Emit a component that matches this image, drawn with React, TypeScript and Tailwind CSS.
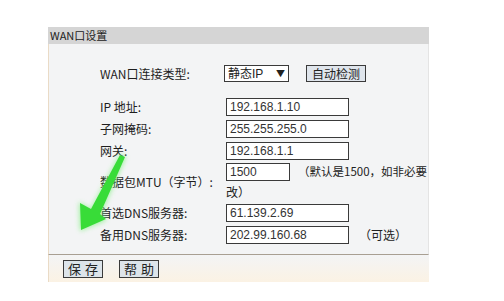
const FONT = 'font-["SimSun","Noto_Sans_CJK_SC",sans-serif]';

const Field = ({ value, wide = true }: { value: string; wide?: boolean }) => (
  <div
    className={`flex h-[18px] items-center border border-[#3a3a3a] bg-white pl-[3px] font-["Liberation_Sans",Arial,sans-serif] text-[12px] leading-none text-[#333] ${
      wide ? 'w-[123px]' : 'w-[64px]'
    }`}
  >
    {value}
  </div>
);

const Row = ({ label, children, className = '' }: { label: string; children: React.ReactNode; className?: string }) => (
  <div className={`grid grid-cols-[126px_1fr] items-center ${className}`}>
    <span className="text-[12px] leading-none text-[#1e1e1e]">{label}</span>
    <div className="flex items-center">{children}</div>
  </div>
);

const Arrow = () => (
  <svg className="pointer-events-none absolute left-0 top-0" width="504" height="301" aria-hidden>
    <defs>
      <filter id="glow" x="-50%" y="-50%" width="200%" height="200%">
        <feGaussianBlur stdDeviation="2.4" />
      </filter>
    </defs>
    <polygon
      points="120,154 126,157 101,214 107,220 80,231 79,202 91,209"
      fill="#84f084"
      opacity="0.75"
      filter="url(#glow)"
    />
    <polygon points="120,155 125,157 100,214 106,219 81,230 80,203 91,209" fill="#38dc38" />
  </svg>
);

export default function App() {
  return (
    <div className={`relative h-[301px] w-[504px] overflow-hidden bg-white pl-[48px] pt-[27px] ${FONT}`}>
      <div className="w-[381px]">
        <div className="flex h-[17px] items-center bg-[#d5d5d5] pl-[2px] text-[11px] leading-none text-[#222]">
          WAN口设置
        </div>
        <div className="h-[211px] border-b border-l border-r border-b-[#a89f92] border-l-[#eadbc6] border-r-[#e4e4e4] bg-[#f3f4f5] pl-[51px] pt-[21px]">
          <Row label="WAN口连接类型:">
            <div className="-ml-[2px] flex h-[17px] w-[65px] items-center justify-between border border-[#3a3a3a] bg-white px-[3px] text-[12px] leading-none text-[#222]">
              <span>
                静态<span className='font-["Liberation_Sans",Arial,sans-serif]'>IP</span>
              </span>
              <span className="text-[9px]">▼</span>
            </div>
            <div className="ml-[17px] flex h-[17px] w-[60px] items-center justify-center border border-[#3a3a3a] bg-[#dfe5ec] text-[12px] leading-none text-[#222]">
              自动检测
            </div>
          </Row>
          <Row label="IP 地址:" className="mt-[16px]">
            <Field value="192.168.1.10" />
          </Row>
          <Row label="子网掩码:" className="mt-[4px]">
            <Field value="255.255.255.0" />
          </Row>
          <Row label="网关:" className="mt-[4px]">
            <Field value="192.168.1.1" />
          </Row>
          <Row label="数据包MTU（字节）:" className="mt-[3px]">
            <div className="flex flex-col">
              <div className="flex items-center">
                <Field value="1500" wide={false} />
                <span className="ml-[8px] whitespace-nowrap text-[11.5px] leading-none text-[#222]">（默认是1500，如非必要</span>
              </div>
              <span className="mt-[5px] h-[14px] text-[12px] leading-none text-[#222]">改）</span>
            </div>
          </Row>
          <Row label="首选DNS服务器:" className="mt-[4px]">
            <Field value="61.139.2.69" />
          </Row>
          <Row label="备用DNS服务器:" className="mt-[4px]">
            <Field value="202.99.160.68" />
            <span className="ml-[10px] text-[12px] leading-none text-[#222]">（可选）</span>
          </Row>
        </div>
        <div className="flex h-[27px] items-center gap-[16px] border-l border-l-[#eadbc6] bg-gradient-to-b from-[#f3f4f5] to-[#fbf2e4] pl-[14px]">
          <div className="flex h-[18px] w-[40px] items-center justify-center border border-[#3a3a3a] bg-[#dde4ea] pl-[4px] text-[13px] tracking-[4px] leading-none text-[#222]">
            保存
          </div>
          <div className="flex h-[18px] w-[40px] items-center justify-center border border-[#3a3a3a] bg-[#dde4ea] pl-[4px] text-[13px] tracking-[4px] leading-none text-[#222]">
            帮助
          </div>
        </div>
      </div>
      <Arrow />
    </div>
  );
}
